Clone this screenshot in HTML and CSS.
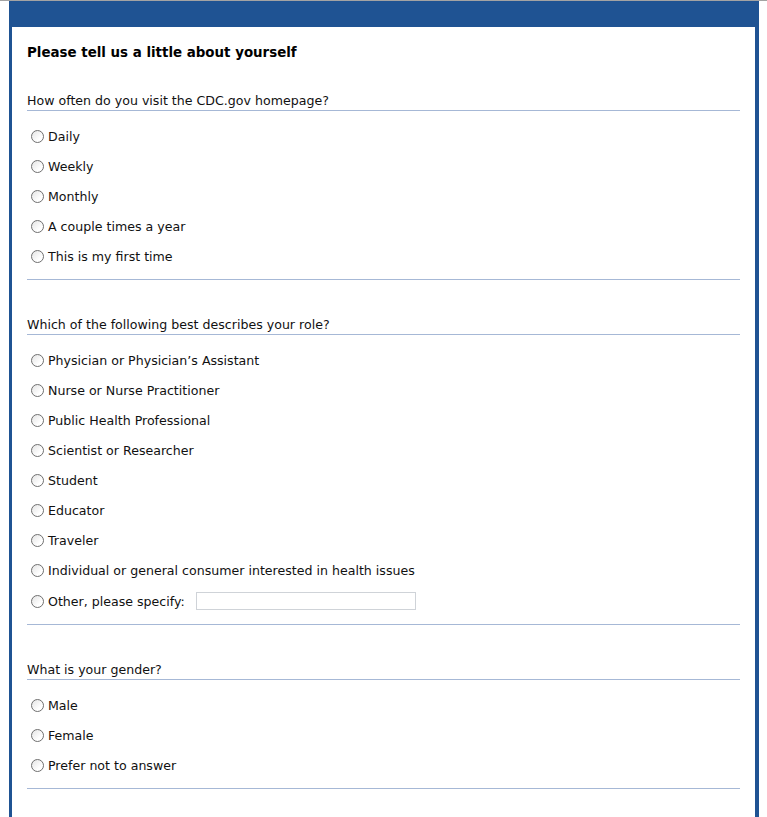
FILE: index.html
```html
<!DOCTYPE html>
<html lang="en">
<head>
  <meta charset="UTF-8">
  <meta name="viewport" content="width=device-width, initial-scale=1.0">
  <title>CDC.gov Survey</title>
  <link rel="stylesheet" href="styles.css">
</head>
<body>
  <div class="survey">
    <div class="survey-header"></div>
    <div class="survey-body">
      <h1>Please tell us a little about yourself</h1>

      <div class="question">
        <div class="question-text">How often do you visit the CDC.gov homepage?</div>
        <ul class="options">
          <li><span class="radio"></span>Daily</li>
          <li><span class="radio"></span>Weekly</li>
          <li><span class="radio"></span>Monthly</li>
          <li><span class="radio"></span>A couple times a year</li>
          <li><span class="radio"></span>This is my first time</li>
        </ul>
      </div>

      <div class="question">
        <div class="question-text">Which of the following best describes your role?</div>
        <ul class="options">
          <li><span class="radio"></span>Physician or Physician’s Assistant</li>
          <li><span class="radio"></span>Nurse or Nurse Practitioner</li>
          <li><span class="radio"></span>Public Health Professional</li>
          <li><span class="radio"></span>Scientist or Researcher</li>
          <li><span class="radio"></span>Student</li>
          <li><span class="radio"></span>Educator</li>
          <li><span class="radio"></span>Traveler</li>
          <li><span class="radio"></span>Individual or general consumer interested in health issues</li>
          <li class="other"><span class="radio"></span>Other, please specify: <input type="text" class="specify"></li>
        </ul>
      </div>

      <div class="question">
        <div class="question-text">What is your gender?</div>
        <ul class="options">
          <li><span class="radio"></span>Male</li>
          <li><span class="radio"></span>Female</li>
          <li><span class="radio"></span>Prefer not to answer</li>
        </ul>
      </div>
    </div>
  </div>
</body>
</html>
```

FILE: styles.css
```css
body {
  margin: 0;
  font-family: "DejaVu Sans", Verdana, sans-serif;
  font-size: 12.6px;
  color: #111;
  background-color: #fff;
  border-top: 1px solid #a3a3a3;
}
.survey {
  margin-left: 9px;
  width: 750px;
}
.survey-header {
  height: 26px;
  background-color: #1f5393;
}
.survey-body {
  border-left: 3px solid #1f5393;
  border-right: 4px solid #1f5393;
  padding: 18px 15px 40px 15px;
}
h1 {
  margin: 0 0 31px 0;
  font-size: 13.4px;
  line-height: 16px;
  font-weight: bold;
  color: #000;
}
.question {
  border-bottom: 1px solid #a6b8d6;
  margin-bottom: 36px;
}
.question-text {
  line-height: 16px;
  padding-top: 1px;
  padding-bottom: 1px;
  border-bottom: 1px solid #a6b8d6;
}
.options {
  list-style: none;
  margin: 10px 0 8px 0;
  padding: 0;
}
.options li {
  display: flex;
  align-items: center;
  box-sizing: border-box;
  height: 30px;
  padding: 1px 0 0 4px;
}
.options li.other {
  height: 31px;
}
.radio {
  width: 11px;
  height: 11px;
  border: 1px solid #6f6f6f;
  border-radius: 50%;
  background: linear-gradient(135deg, #e4e4e4, #fff 70%);
  margin-right: 4px;
  flex-shrink: 0;
}
.specify {
  margin-left: 11px;
  width: 220px;
  height: 18px;
  box-sizing: border-box;
  border: 1px solid #cfd3d8;
  padding: 0 3px;
  font-family: inherit;
  font-size: 12px;
}
```
